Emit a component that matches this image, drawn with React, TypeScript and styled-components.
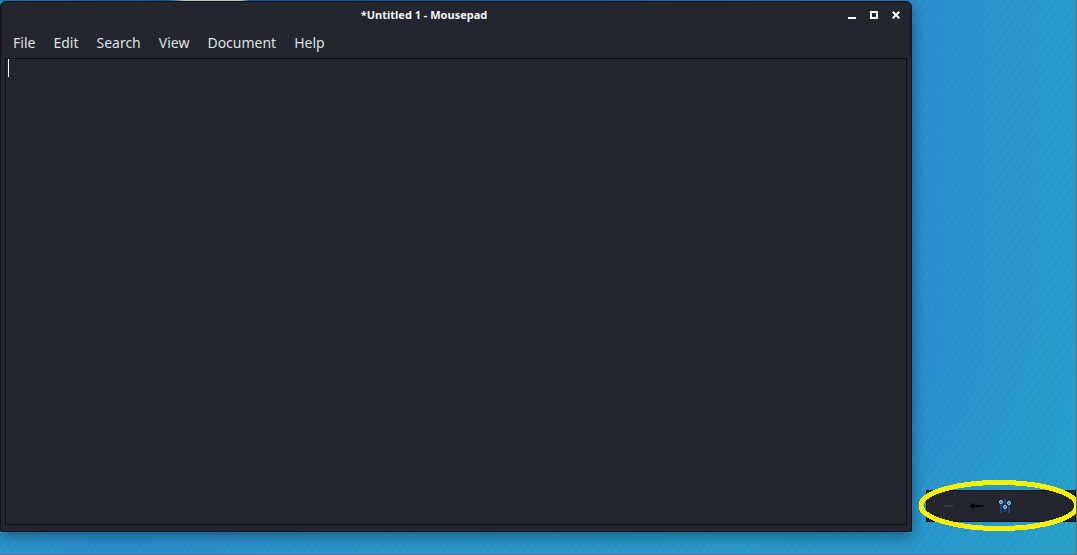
import React from "react";
import styled, { createGlobalStyle } from "styled-components";

const GlobalStyle = createGlobalStyle`
  * { box-sizing: border-box; }
  body { margin: 0; font-family: "Noto Sans", sans-serif; }
`;

const Desktop = styled.main`
  display: grid;
  grid-template-columns: minmax(0, 1fr) 164px;
  min-height: 100vh;
  padding-top: 1px;
  overflow: hidden;
  border-right: 1px solid #66707c;
  border-bottom: 1px solid #66707c;
  background:
    linear-gradient(90deg, #2080bf 0, #1c5fa8 170px, #d5ddd2 185px, #d5ddd2 240px, #1c5aa8 250px, #2468b8 600px, #2787c8 100%) 0 0 / 912px 1px no-repeat,
    repeating-linear-gradient(125deg, rgba(0, 30, 80, 0.015) 0 3px, rgba(255, 255, 255, 0.01) 3px 6px),
    linear-gradient(160deg, transparent 75%, rgba(36, 164, 200, 0.6) 100%),
    linear-gradient(90deg, #2998cd 0, #2b90cf 10%, #2998cc 35%, #2a9acc 70%, #2b8fcf 87%, #289ccb 100%);
`;

const Window = styled.section`
  display: flex;
  flex-direction: column;
  margin-bottom: 22px;
  border: 1px solid #0f1219;
  border-radius: 6px 6px 2px 2px;
  background: #23262f;
  box-shadow: 0 4px 16px rgba(0, 15, 40, 0.45);
`;

const TitleBar = styled.header`
  display: grid;
  grid-template-columns: minmax(0, 1fr) auto;
  align-items: center;
  height: 26px;
  padding-right: 4px;
`;

const Title = styled.h1`
  margin: 0;
  padding-left: 6px;
  color: #f2f3f4;
  font-size: 11px;
  font-weight: 700;
  line-height: 16px;
  text-align: center;
`;

const WindowControls = styled.div`
  display: flex;
`;

const ControlButton = styled.button`
  display: flex;
  align-items: center;
  justify-content: center;
  width: 22px;
  height: 24px;
  padding: 0;
  border: 0;
  background: none;
  color: #fff;
`;

const MenuBar = styled.nav`
  display: flex;
  align-items: center;
  height: 30px;
  padding: 0 3px;
`;

const MenuItem = styled.button`
  padding: 0 9px;
  border: 0;
  background: none;
  color: #dfe1e2;
  font: 14px/20px "Noto Sans", sans-serif;
`;

const Editor = styled.div`
  position: relative;
  display: flex;
  flex: 1;
  margin: 0 4px 6px;
`;

const TextArea = styled.textarea`
  flex: 1;
  min-width: 0;
  padding: 0 2px;
  border: 1px solid #0c0e15;
  outline: 0;
  resize: none;
  background: #23262f;
  color: #fff;
  caret-color: transparent;
  font: 14px/19px "Noto Sans", sans-serif;
`;

const Caret = styled.span`
  position: absolute;
  top: 1px;
  left: 3px;
  width: 1px;
  height: 18px;
  background: #fff;
`;

const Side = styled.aside`
  display: flex;
  flex-direction: column;
  justify-content: flex-end;
  padding: 0 0 32px 14px;
`;

const Panel = styled.div`
  position: relative;
  display: flex;
  align-items: center;
  gap: 12px;
  height: 32px;
  padding-left: 14px;
  border: 1px solid #0f1219;
  background: #23262f;
`;

const PanelButton = styled.button`
  display: flex;
  padding: 0;
  border: 0;
  background: none;
`;

const Highlight = styled.svg`
  position: absolute;
  top: -11px;
  left: -8px;
  width: 160px;
  height: 51px;
  pointer-events: none;
`;

const menus = ["File", "Edit", "Search", "View", "Document", "Help"];

export default function App() {
  return (
    <>
      <GlobalStyle />
      <Desktop>
        <Window>
          <TitleBar>
            <Title>*Untitled 1 - Mousepad</Title>
            <WindowControls>
              <ControlButton aria-label="Minimize">
                <svg width="8" height="8" shapeRendering="crispEdges"><path d="M0 6h8v2H0z" fill="currentColor" /></svg>
              </ControlButton>
              <ControlButton aria-label="Maximize">
                <svg width="8" height="8" shapeRendering="crispEdges"><path d="M1 1h6v6H1z" fill="none" stroke="currentColor" strokeWidth="2" /></svg>
              </ControlButton>
              <ControlButton aria-label="Close">
                <svg width="8" height="8"><path d="M.7.7l6.6 6.6M7.3.7L.7 7.3" stroke="currentColor" strokeWidth="2" /></svg>
              </ControlButton>
            </WindowControls>
          </TitleBar>
          <MenuBar aria-label="Menu">
            {menus.map((name) => <MenuItem key={name}>{name}</MenuItem>)}
          </MenuBar>
          <Editor>
            <TextArea aria-label="Document text" spellCheck={false} />
            <Caret />
          </Editor>
        </Window>
        <Side>
          <Panel>
            <PanelButton aria-label="Collapse">
              <svg width="16" height="16"><path d="M3 7h9v2H3z" fill="#303d49" /></svg>
            </PanelButton>
            <PanelButton aria-label="Back">
              <svg width="16" height="16"><path d="M1 8l3-3h1v2h9v2H5v2H4z" fill="#050608" /></svg>
            </PanelButton>
            <PanelButton aria-label="Settings">
              <svg width="16" height="16">
                <path d="M4 2v13M8 1v13M12 2v13" stroke="#1c4695" strokeWidth="2" />
                <g fill="#16a0a6" stroke="#a9c6cb">
                  <circle cx="4" cy="4" r="1.6" />
                  <circle cx="8" cy="9" r="1.6" />
                  <circle cx="12" cy="5" r="1.6" />
                </g>
              </svg>
            </PanelButton>
            <Highlight viewBox="0 0 160 51" aria-hidden="true">
              <ellipse cx="80" cy="25.5" rx="78" ry="23" fill="none" stroke="#fff200" strokeWidth="5" shapeRendering="crispEdges" />
            </Highlight>
          </Panel>
        </Side>
      </Desktop>
    </>
  );
}
